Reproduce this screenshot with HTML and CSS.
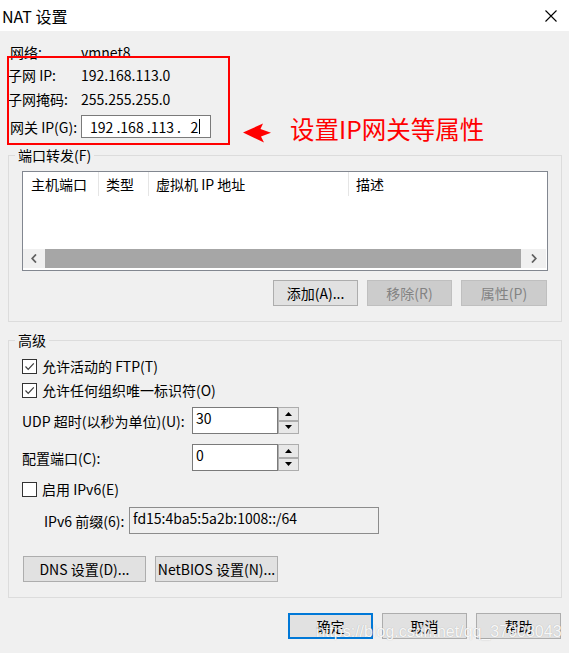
FILE: index.html
```html
<!DOCTYPE html>
<html lang="zh-CN">
<head>
<meta charset="utf-8">
<title>NAT 设置</title>
<link rel="stylesheet" href="styles.css">
</head>
<body>
<div class="window">
  <div class="titlebar">
    <span class="title">NAT 设置</span>
    <svg class="close" viewBox="0 0 12 12"><path d="M0.5 0.5L11.5 11.5M11.5 0.5L0.5 11.5" stroke="#000" stroke-width="1.1" fill="none"/></svg>
  </div>
  <div class="content">
    <div class="info">
      <div class="row r1"><span class="lbl">网络:</span><span class="val">vmnet8</span></div>
      <div class="row r2"><span class="lbl">子网 IP:</span><span class="val">192.168.113.0</span></div>
      <div class="row r3"><span class="lbl">子网掩码:</span><span class="val">255.255.255.0</span></div>
      <div class="row r4">
        <span class="lbl">网关 IP(G):</span>
        <div class="ipbox"><span>192 .168 .113 .   2</span><span class="caret"></span></div>
        <svg class="arrow" viewBox="0 0 28 20"><path d="M0 9.5 L20 0.5 L17.5 6 L28 9.8 L18 13.5 L21 19.5 Z" fill="#ff0000"/></svg>
        <span class="note">设置IP网关等属性</span>
      </div>
      <div class="redbox"></div>
    </div>

    <fieldset class="group fwd">
      <legend>端口转发(F)</legend>
      <div class="list">
        <div class="lhead">
          <div class="col c1">主机端口</div>
          <div class="col c2">类型</div>
          <div class="col c3">虚拟机 IP 地址</div>
          <div class="col c4">描述</div>
        </div>
        <div class="lbody"></div>
        <div class="hscroll">
          <div class="sarrow sleft"><svg viewBox="0 0 6 9" class="chev"><path d="M5 0.5 L1.2 4.5 L5 8.5" stroke="#606060" stroke-width="1.8" fill="none"/></svg></div>
          <div class="thumb"></div>
          <div class="sarrow sright"><svg viewBox="0 0 6 9" class="chev"><path d="M1 0.5 L4.8 4.5 L1 8.5" stroke="#606060" stroke-width="1.8" fill="none"/></svg></div>
        </div>
      </div>
      <div class="btnrow">
        <button class="btn">添加(A)...</button>
        <button class="btn" disabled>移除(R)</button>
        <button class="btn wide1" disabled>属性(P)</button>
      </div>
    </fieldset>

    <fieldset class="group adv">
      <legend>高级</legend>
      <div class="cbrow"><span class="cb"><svg viewBox="0 0 13 13"><path d="M2.5 6.5 L5.2 9.3 L10.8 3.3" stroke="#3c3c3c" stroke-width="1.2" fill="none"/></svg></span><span>允许活动的 FTP(T)</span></div>
      <div class="cbrow cb2row"><span class="cb"><svg viewBox="0 0 13 13"><path d="M2.5 6.5 L5.2 9.3 L10.8 3.3" stroke="#3c3c3c" stroke-width="1.2" fill="none"/></svg></span><span>允许任何组织唯一标识符(O)</span></div>

      <div class="spinrow spin1">
        <span class="slbl">UDP 超时(以秒为单位)(U):</span>
        <div class="spin">
          <div class="sedit">30</div>
          <div class="sbtns">
            <div class="sbtn"><svg viewBox="0 0 7 4" class="tri"><path d="M0 4 L3.5 0 L7 4 Z" fill="#000"/></svg></div>
            <div class="sbtn"><svg viewBox="0 0 7 4" class="tri"><path d="M0 0 L3.5 4 L7 0 Z" fill="#000"/></svg></div>
          </div>
        </div>
      </div>
      <div class="spinrow spin2">
        <span class="slbl">配置端口(C):</span>
        <div class="spin">
          <div class="sedit">0</div>
          <div class="sbtns">
            <div class="sbtn"><svg viewBox="0 0 7 4" class="tri"><path d="M0 4 L3.5 0 L7 4 Z" fill="#000"/></svg></div>
            <div class="sbtn"><svg viewBox="0 0 7 4" class="tri"><path d="M0 0 L3.5 4 L7 0 Z" fill="#000"/></svg></div>
          </div>
        </div>
      </div>

      <div class="cbrow cb3row"><span class="cb"></span><span>启用 IPv6(E)</span></div>

      <div class="v6row">
        <span class="v6lbl">IPv6 前缀(6):</span>
        <div class="v6box">fd15:4ba5:5a2b:1008::/64</div>
      </div>

      <div class="dnsrow">
        <button class="btn btnwide">DNS 设置(D)...</button>
        <button class="btn btnwide">NetBIOS 设置(N)...</button>
      </div>
    </fieldset>

    <div class="footer">
      <button class="btn default">确定</button>
      <button class="btn">取消</button>
      <button class="btn">帮助</button>
    </div>
  </div>
  <div class="watermark">https://blog.csdn.net/qq_37908043</div>
</div>
</body>
</html>
```

FILE: styles.css
```css
* { box-sizing: border-box; }
html, body { margin: 0; padding: 0; }
body {
  width: 569px;
  height: 653px;
  overflow: hidden;
  background: #f0f0f0;
  font-family: "Noto Sans CJK SC", "Noto Sans", sans-serif;
  font-size: 14px;
  line-height: 18px;
  color: #000;
}
.window { position: relative; width: 569px; height: 653px; }

.titlebar {
  height: 31px;
  background: #fff;
  display: flex;
  align-items: center;
  justify-content: space-between;
  padding: 0 12px 0 2px;
}
.title { font-size: 16px; line-height: 20px; }
.close { width: 12px; height: 12px; display: block; }

.content { padding: 0 7px 0 8px; }

.info { position: relative; padding-top: 10px; }
.row { display: flex; align-items: center; }
.r1 { height: 22px; }
.r2, .r3 { height: 24px; }
.r4 { height: 23px; margin-top: 4px; }
.lbl { width: 73px; flex: none; white-space: nowrap; }
.r1 .lbl, .r4 .lbl { padding-left: 2px; }
.ipbox {
  width: 130px;
  height: 23px;
  flex: none;
  background: #fff;
  border: 1px solid #7a7a7a;
  padding-left: 8px;
  display: flex;
  align-items: center;
  white-space: pre;
}
.caret { display: inline-block; width: 1px; height: 15px; background: #000; margin-left: 1px; }
.arrow { width: 28px; height: 20px; flex: none; margin-left: 32px; margin-top: 12px; }
.note {
  margin-left: 19px;
  margin-top: 3px;
  font-size: 24.5px;
  line-height: 27px;
  color: #ff0000;
  white-space: nowrap;
}
.redbox {
  position: absolute;
  left: -1px;
  top: 25px;
  width: 223px;
  height: 89px;
  border: 2px solid #ff0000;
}

.group {
  margin: 0;
  border: 1px solid #dcdcdc;
  min-width: 0;
}
.group legend { padding: 0 3px; margin-left: -7px; line-height: 16px; }
.fwd { margin-top: 9px; padding: 8px 13px 15px 13px; }
.adv { margin-top: 10px; padding: 8px 13px 15px 13px; }

.list {
  height: 100px;
  border: 1px solid #828790;
  background: #fff;
  display: flex;
  flex-direction: column;
}
.lhead { height: 24px; display: flex; flex: none; }
.col {
  line-height: 24px;
  padding-left: 7px;
  border-right: 1px solid #e5e5e5;
  white-space: nowrap;
  flex: none;
}
.c1 { width: 76px; padding-left: 8px; }
.c2 { width: 50px; }
.c3 { width: 200px; }
.c4 { flex: 1; border-right: 0; }
.lbody { flex: 1; }
.hscroll { height: 19px; flex: none; display: flex; margin: 0 1px 2px 0; }
.sarrow { background: #f0f0f0; display: flex; align-items: center; justify-content: center; flex: none; }
.sleft { width: 22px; }
.sright { width: 25px; }
.chev { width: 6px; height: 9px; display: block; }
.thumb { flex: 1; background: #a6a6a6; }

.btn {
  font: inherit;
  line-height: 20px;
  width: 85px;
  height: 26px;
  padding: 0;
  margin: 0;
  color: #000;
  background: #e1e1e1;
  border: 1px solid #adadad;
  border-radius: 0;
  white-space: nowrap;
}
.btn:disabled { background: #cccccc; border-color: #bfbfbf; color: #838383; }
.wide1 { width: 86px; }
.btnrow { display: flex; justify-content: flex-end; gap: 9px; margin-top: 9px; padding-right: 1px; }

.cbrow { display: flex; align-items: center; height: 20px; }
.cb2row { margin-top: 4px; }
.cb3row { margin-top: 8px; }
.cb {
  width: 15px;
  height: 15px;
  flex: none;
  border: 1px solid #333;
  background: #fff;
  margin-right: 5px;
  display: flex;
}
.cb svg { width: 13px; height: 13px; display: block; }

.spinrow { display: flex; align-items: center; height: 27px; }
.spin1 { margin-top: 7px; }
.spin2 { margin-top: 10px; }
.slbl { width: 170px; flex: none; white-space: nowrap; }
.spin { display: flex; height: 27px; }
.sedit {
  width: 86px;
  border: 1px solid #7a7a7a;
  background: #fff;
  padding-left: 3px;
  line-height: 20px;
}
.sbtns { width: 21px; display: flex; flex-direction: column; }
.sbtn {
  flex: 1;
  border: 1px solid #adadad;
  background: #e8e8e8;
  display: flex;
  align-items: center;
  justify-content: center;
}
.tri { width: 7px; height: 4px; display: block; }

.v6row { display: flex; align-items: center; height: 27px; margin-top: 8px; }
.v6lbl { width: 85px; margin-left: 22px; flex: none; white-space: nowrap; }
.v6box {
  width: 250px;
  height: 27px;
  border: 1px solid #8c8c8c;
  background: #f0f0f0;
  padding-left: 3px;
  line-height: 20px;
}

.dnsrow { display: flex; gap: 9px; margin-top: 22px; margin-left: 1px; }
.btnwide { width: 123px; }

.footer { display: flex; justify-content: flex-end; gap: 9px; margin-top: 15px; padding-right: 1px; }
.default { border: 2px solid #0078d7; }

.watermark {
  position: absolute;
  left: 316px;
  top: 624px;
  font-family: "Liberation Sans", Arial, sans-serif;
  font-size: 16px;
  line-height: 16px;
  white-space: nowrap;
  color: rgba(255, 255, 255, 0.92);
  text-shadow: 0 0 1px rgba(0, 0, 0, 0.25);
}
```
